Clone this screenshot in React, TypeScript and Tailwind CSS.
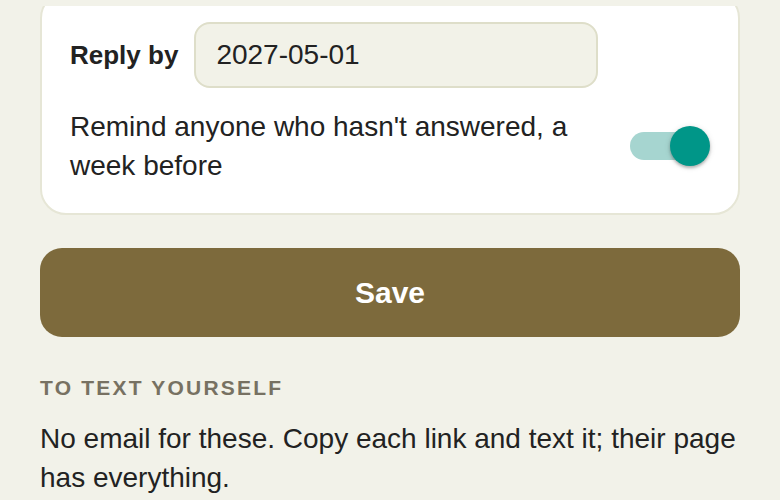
import React from "react"

function Toggle({ on }: { on: boolean }) {
  return (
    <div className="relative w-[80px] h-[40px] shrink-0">
      <div
        className={`absolute left-0 top-[6px] w-[70px] h-[28px] rounded-full ${
          on ? "bg-[#a6d5d0]" : "bg-[#c9c9bd]"
        }`}
      />
      <div
        className={`absolute top-0 w-10 h-10 rounded-full shadow-[0_2px_3px_rgba(0,0,0,0.25),0_1px_6px_rgba(0,0,0,0.12)] ${
          on ? "right-0 bg-[#009688]" : "left-0 bg-white"
        }`}
      />
    </div>
  )
}

export default function App() {
  return (
    <div
      className="min-h-[500px] bg-[#f2f2e9] text-[#222] overflow-hidden"
      style={{ fontFamily: '"Liberation Sans", Arial, sans-serif' }}
    >
      <div className="relative z-10 h-[6px] bg-[#f2f2e9]" />

      <div className="px-10">
        {/* Reminder card */}
        <div className="-mt-[14px] bg-white border-2 border-[#e6e6d6] rounded-[26px] px-[28px] pt-[28px] pb-[28px]">
          <div className="flex items-center gap-4">
            <span className="text-[26px] font-bold">Reply by</span>
            <div className="w-[404px] h-[66px] flex items-center px-[20px] bg-[#f2f2e8] border-2 border-[#dedec9] rounded-[16px] text-[28px]">
              2027-05-01
            </div>
          </div>
          <div className="mt-[19px] flex items-center justify-between gap-6">
            <p className="text-[28px] leading-[39px]">
              Remind anyone who hasn't answered, a week before
            </p>
            <Toggle on />
          </div>
        </div>

        <button className="mt-[33px] w-full h-[89px] rounded-[22px] bg-[#7d6a3c] text-white text-[30px] font-bold">
          Save
        </button>

        <h3 className="mt-[35px] text-[21px] leading-[32px] font-bold uppercase tracking-[2.2px] text-[#777162]">
          To text yourself
        </h3>
        <p className="mt-[15px] text-[28px] leading-[39px]">
          No email for these. Copy each link and text it; their page has everything.
        </p>
      </div>
    </div>
  )
}
